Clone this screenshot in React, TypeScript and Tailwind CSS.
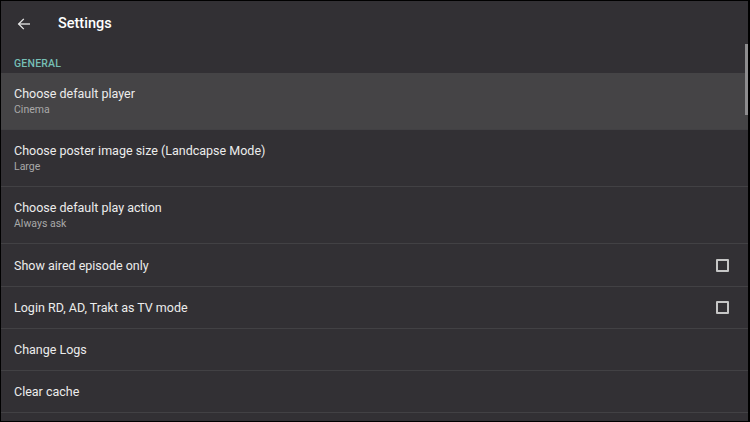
import React from "react";

const Row = ({ title, sub, highlight, checkbox, tall }: { title: string; sub?: string; highlight?: boolean; checkbox?: boolean; tall?: boolean }) => (
  <div
    className={`flex items-center justify-between border-b border-[#424144] pl-[13px] pr-[18px] ${sub ? "h-[57px]" : tall ? "h-[43px]" : "h-[42px]"} ${highlight ? "bg-[#454446]" : ""}`}
  >
    <div className="flex flex-col pt-[1px]">
      <div className="text-[12.5px] leading-[16px] text-[#ececec]">{title}</div>
      {sub && <div className="text-[10.5px] leading-[14px] text-[#a9a9a9] mt-[1px]">{sub}</div>}
    </div>
    {checkbox && <div className="w-[13px] h-[13px] border-[2px] border-[#c6c6c6] rounded-[1px] mr-[1px]" />}
  </div>
);

export default function App() {
  return (
    <div className="w-[750px] h-[422px] bg-black pt-[1px] pl-[1px] pr-[2px] pb-[1px]" style={{ fontFamily: "Roboto, 'Noto Sans', sans-serif" }}>
      <div className="relative w-full h-full bg-[#323034] overflow-hidden">
        <div className="h-[45px] flex items-center">
          <svg className="ml-[15px]" width="16" height="16" viewBox="0 0 24 24" fill="none" stroke="#e6e6e6" strokeWidth="2" strokeLinecap="square">
            <path d="M20 12H5" />
            <path d="M11 5l-7 7 7 7" />
          </svg>
          <span className="ml-[26px] text-[14.5px] font-medium text-white">Settings</span>
        </div>
        <div className="h-[27px] flex items-end pb-[1px] pl-[13px]">
          <span className="text-[10.5px] font-medium tracking-[0.2px] text-[#76bfb5]">GENERAL</span>
        </div>
        <Row title="Choose default player" sub="Cinema" highlight />
        <Row title="Choose poster image size (Landcapse Mode)" sub="Large" />
        <Row title="Choose default play action" sub="Always ask" />
        <Row title="Show aired episode only" checkbox tall />
        <Row title="Login RD, AD, Trakt as TV mode" checkbox />
        <Row title="Change Logs" />
        <Row title="Clear cache" />
        <div className="absolute right-0 top-[43px] w-[3px] h-[71px] bg-[#8e8d8f]" />
      </div>
    </div>
  );
}
